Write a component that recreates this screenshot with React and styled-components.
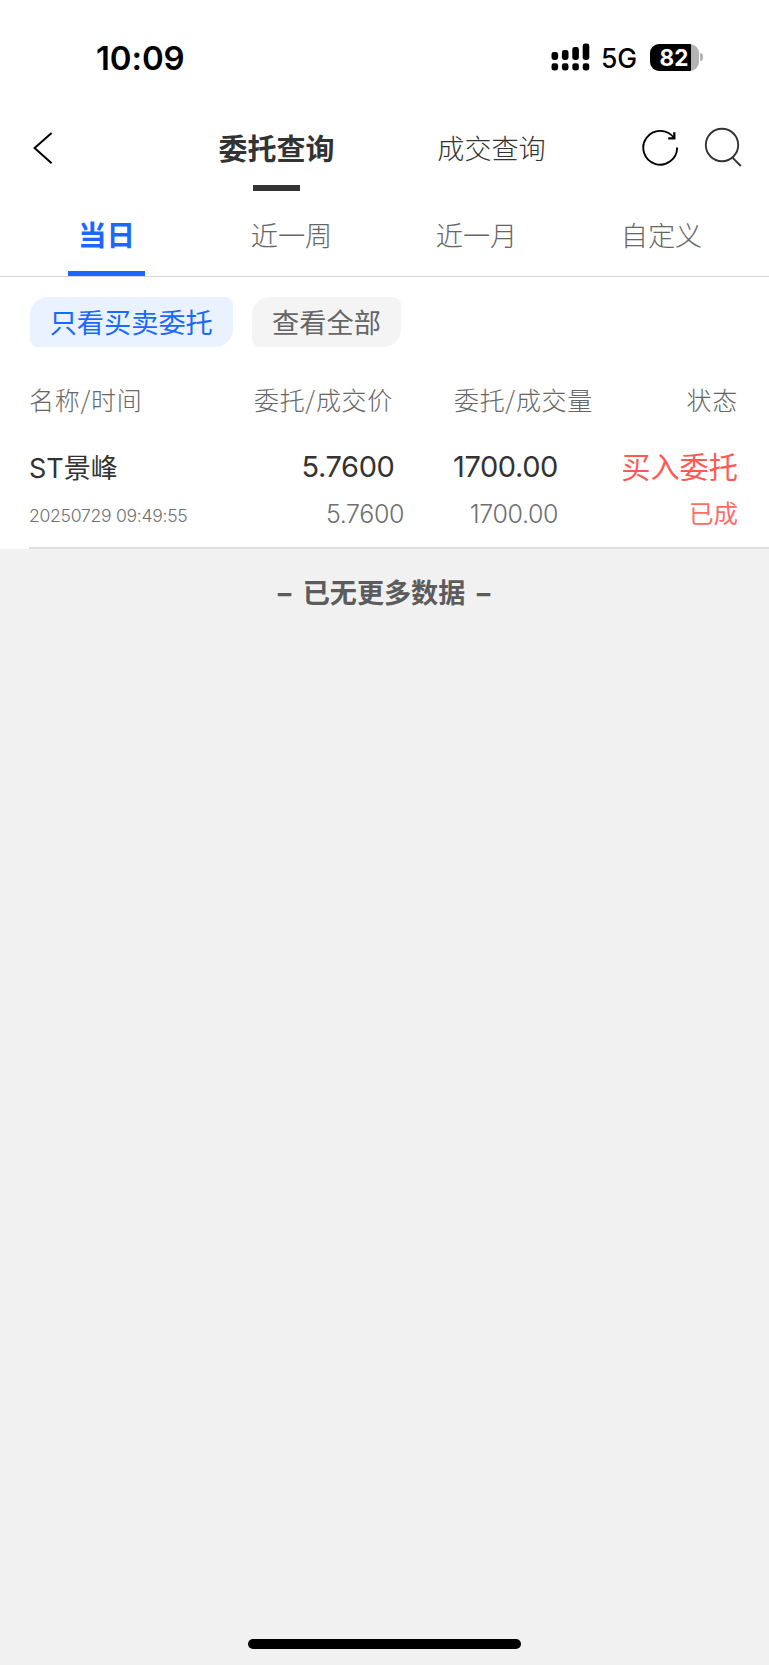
import React from 'react';
import styled, { createGlobalStyle } from 'styled-components';

const cjk = '"Noto Sans CJK SC", sans-serif';
const latin = 'Inter, "Noto Sans CJK SC", sans-serif';

const GlobalStyle = createGlobalStyle`
  * { box-sizing: border-box; }
  body { margin: 0; background: #f1f1f1; font-family: ${cjk}; }
`;

const Screen = styled.div`
  width: 769px;
  height: 1665px;
  display: flex;
  flex-direction: column;
  background: #f1f1f1;
  overflow: hidden;
`;

const Panel = styled.div`
  background: #fff;
`;

const StatusBar = styled.header`
  height: 116px;
  padding: 0 66px 2px 96px;
  display: flex;
  align-items: center;
  color: #000;
  font-family: ${latin};
`;

const Clock = styled.span`
  flex: 1;
  font-size: 33px;
  font-weight: 600;
  line-height: 40px;
  padding-top: 1px;
  letter-spacing: -0.1px;
`;

const Network = styled.span`
  margin: 0 13px 0 11px;
  padding-top: 2px;
  font-size: 26.5px;
  font-weight: 500;
  line-height: 32px;
  letter-spacing: -0.1px;
`;

const Battery = styled.div`
  width: 49px;
  height: 27px;
  border-radius: 9px;
  padding-right: 1px;
  background: linear-gradient(to right, #000 41px, #b3b3b3 41px);
  color: #fff;
  font-size: 22.5px;
  font-weight: 700;
  line-height: 27px;
  text-align: center;
`;

const BatteryTip = styled.div`
  width: 3px;
  height: 8px;
  margin-left: 1px;
  border-radius: 0 3px 3px 0;
  background: #b3b3b3;
`;

const NavBar = styled.nav`
  height: 84px;
  padding: 0 27px 0 33px;
  display: flex;
  align-items: flex-start;
`;

const BackIcon = styled.svg`
  width: 20px;
  height: 34px;
  margin-top: 15px;
  margin-right: 166px;
`;

const NavTitle = styled.span`
  display: flex;
  flex-direction: column;
  align-items: center;
  padding-top: ${(p) => (p.$active ? 11 : 12)}px;
  white-space: nowrap;
  line-height: 40px;
  font-size: ${(p) => (p.$active ? 29 : 27.1)}px;
  font-weight: ${(p) => (p.$active ? 700 : 300)};
  color: #333;
  width: ${(p) => (p.$active ? 115 : 109)}px;

  &::after {
    content: '';
    width: 47px;
    height: 6px;
    margin-top: 18px;
    background: ${(p) => (p.$active ? '#333' : 'transparent')};
  }
`;

const NavSpacer = styled.div`
  width: 103px;
`;

const NavActions = styled.div`
  margin-left: auto;
  padding-top: 11px;
  display: flex;
  gap: 24px;
`;

const Tabs = styled.div`
  height: 77px;
  padding: 0 15px 0 14px;
  display: flex;
  border-bottom: 1px solid #d6d6d6;
`;

const Tab = styled.div`
  flex: 1;
  display: flex;
  flex-direction: column;
  align-items: center;
  justify-content: space-between;
  padding-top: 14px;
  line-height: 40px;
  font-size: ${(p) => (p.$active ? 28.5 : 27.2)}px;
  font-weight: ${(p) => (p.$active ? 700 : 300)};
  color: ${(p) => (p.$active ? '#1a68ff' : '#666')};

  &::after {
    content: '';
    width: 77px;
    height: 5px;
    background: ${(p) => (p.$active ? '#1a68ff' : 'transparent')};
  }
`;

const Chips = styled.div`
  padding: 20px 29px 0 29.5px;
  display: flex;
  gap: 19px;
`;

const Chip = styled.div`
  width: ${(p) => p.$width}px;
  height: 50px;
  border-radius: 18px 8px 18px 8px;
  text-align: center;
  font-size: 27.2px;
  line-height: 49px;
  font-weight: 400;
  color: ${(p) => (p.$active ? '#1a68ff' : '#666')};
  background: ${(p) => (p.$active ? '#ebf2ff' : '#f4f4f4')};
`;

const Line = styled.div`
  display: grid;
  grid-template-columns: 200px 175px 190px 144px;
  height: ${(p) => p.$height}px;
  line-height: ${(p) => p.$height}px;
  padding-left: 29px;
`;

const Cell = styled.span`
  white-space: nowrap;
  text-align: ${(p) => (p.$left ? 'left' : 'right')};
  padding-right: ${(p) => p.$inset || 0}px;
`;

const HeadCell = styled(Cell)`
  font-size: 25px;
  font-weight: 300;
  letter-spacing: 0.7px;
  color: #666;
`;

const MainCell = styled(Cell)`
  padding-top: ${(p) => (p.$left ? 3 : 1)}px;
  font-family: ${latin};
  font-size: ${(p) => (p.$left ? 27 : 29)}px;
  letter-spacing: ${(p) => (p.$left ? 0 : -0.4)}px;
  color: #333;
`;

const SubCell = styled(Cell)`
  padding-top: ${(p) => (p.$left ? 2 : 0)}px;
  font-family: ${latin};
  font-size: ${(p) => (p.$left ? 17.6 : 25)}px;
  font-weight: 300;
  letter-spacing: ${(p) => (p.$left ? -0.3 : -0.4)}px;
  color: #707070;
`;

const MainStatus = styled(Cell)`
  margin-top: -1px;
  font-size: 29.2px;
  font-weight: 400;
  color: #ff5a52;
`;

const SubStatus = styled(Cell)`
  margin-top: -1px;
  font-size: 24.5px;
  font-weight: 400;
  color: #ff6b66;
`;

const Divider = styled.div`
  height: 2px;
  margin-top: 10px;
  margin-left: 29px;
  background: #dfdfdf;
`;

const Orders = styled.section`
  padding-top: 32px;
`;

const Order = styled.article`
  padding-top: 22px;
`;

const EndNote = styled.p`
  flex: 1;
  margin: 0;
  padding: 25px 1px 0 0;
  text-align: center;
  font-family: ${latin};
  font-size: 27.1px;
  font-weight: 700;
  line-height: 40px;
  word-spacing: 5px;
  color: #5c5c5c;
`;

const HomeIndicator = styled.div`
  width: 273px;
  height: 10px;
  margin: 0 auto 16px;
  border-radius: 5px;
  background: #000;
`;

const Signal = () => (
  <svg width="39" height="28" viewBox="0 0 39 28" fill="#000">
    {[9, 7, 4, 0.5].map((y, i) => (
      <g key={y}>
        <rect x={0.5 + i * 10.4} y={y} width="6.6" height={17 - y} rx="2.4" />
        <rect x={0.5 + i * 10.4} y="20.3" width="6.6" height="7.2" rx="2.4" />
      </g>
    ))}
  </svg>
);

const RefreshIcon = () => (
  <svg width="38" height="40" viewBox="0 0 38 40" fill="none" stroke="#000" strokeWidth="1.9">
    <path d="M35.1 20.5A16.9 16.9 0 1 1 32 11" />
    <path d="M32.3 5.2V11.3H26.2" strokeWidth="2.3" />
  </svg>
);

const SearchIcon = () => (
  <svg width="38" height="40" viewBox="0 0 38 40" fill="none" stroke="#333" strokeWidth="1.9">
    <circle cx="18" cy="18" r="16.2" />
    <path d="M28 30.2L36.8 39" />
  </svg>
);

export default function App() {
  return (
    <Screen>
      <GlobalStyle />
      <Panel>
        <StatusBar>
          <Clock>10:09</Clock>
          <Signal />
          <Network>5G</Network>
          <Battery>82</Battery>
          <BatteryTip />
        </StatusBar>
        <NavBar>
          <BackIcon viewBox="0 0 20 34" fill="none" stroke="#000" strokeWidth="2">
            <path d="M18.6 2L1.6 17L18.6 32.3" />
          </BackIcon>
          <NavTitle $active>委托查询</NavTitle>
          <NavSpacer />
          <NavTitle>成交查询</NavTitle>
          <NavActions>
            <RefreshIcon />
            <SearchIcon />
          </NavActions>
        </NavBar>
        <Tabs>
          <Tab $active>当日</Tab>
          <Tab>近一周</Tab>
          <Tab>近一月</Tab>
          <Tab>自定义</Tab>
        </Tabs>
        <Chips>
          <Chip $active $width={203.5}>只看买卖委托</Chip>
          <Chip $width={149}>查看全部</Chip>
        </Chips>
        <Orders>
          <Line $height={40}>
            <HeadCell $left>名称/时间</HeadCell>
            <HeadCell $inset={11}>委托/成交价</HeadCell>
            <HeadCell $inset={1}>委托/成交量</HeadCell>
            <HeadCell>状态</HeadCell>
          </Line>
          <Order>
            <Line $height={50}>
              <MainCell $left>ST景峰</MainCell>
              <MainCell $inset={9.5}>5.7600</MainCell>
              <MainCell $inset={36}>1700.00</MainCell>
              <MainStatus>买入委托</MainStatus>
            </Line>
            <Line $height={46}>
              <SubCell $left>20250729 09:49:55</SubCell>
              <SubCell>5.7600</SubCell>
              <SubCell $inset={36}>1700.00</SubCell>
              <SubStatus>已成</SubStatus>
            </Line>
            <Divider />
          </Order>
        </Orders>
      </Panel>
      <EndNote>– 已无更多数据 –</EndNote>
      <HomeIndicator />
    </Screen>
  );
}
